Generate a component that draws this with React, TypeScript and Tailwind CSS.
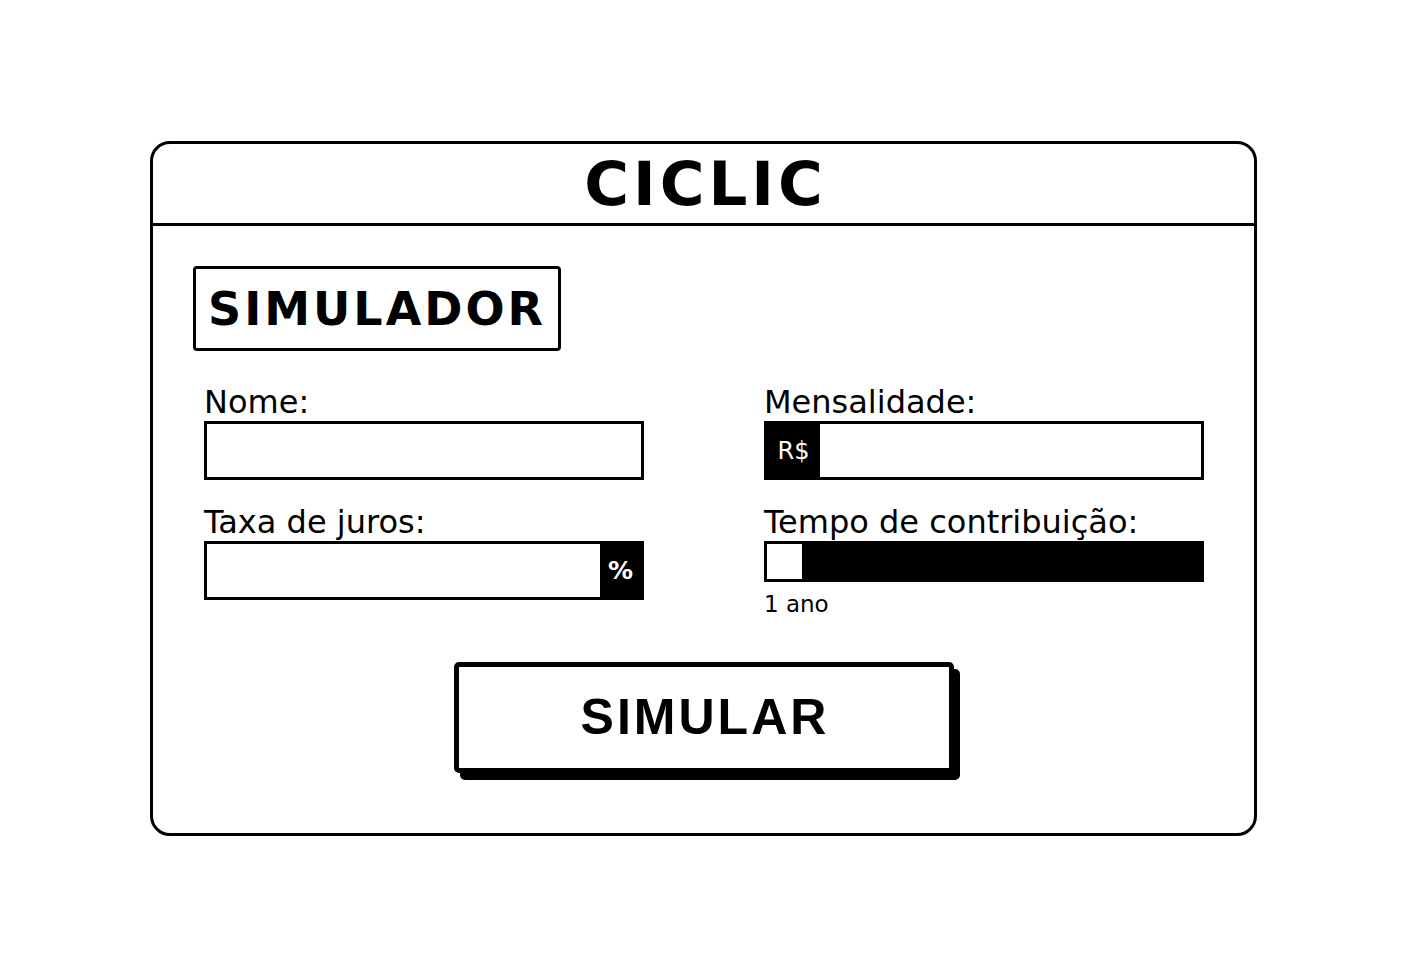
export default function App() {
    const label = "block text-[32px] leading-[26px] mb-[6px] text-black";

    return (
        <div className="min-h-screen bg-white pt-[141px] pl-[3px] font-['DejaVu_Sans',sans-serif] text-black">
            <div className="mx-auto w-[1107px] h-[695px] border-[3px] border-black rounded-[20px] flex flex-col">
                <header className="h-[82px] border-b-[3px] border-black flex items-center justify-center">
                    <h1 className="text-[61px] leading-none font-bold tracking-[4px] pl-[4px]">CICLIC</h1>
                </header>

                <div className="px-[48px] pt-[40px]">
                    <div className="inline-flex items-center h-[85px] px-[12px] -ml-[8px] border-[3px] border-black rounded-[4px]">
                        <h2 className="text-[46px] leading-none font-bold tracking-[3px]">SIMULADOR</h2>
                    </div>

                    <div className="mt-[38px] grid grid-cols-[440px_440px] gap-x-[120px] gap-y-[29px] pl-[3px]">
                        <div>
                            <label className={label}>Nome:</label>
                            <div className="h-[59px] border-[3px] border-black" />
                        </div>

                        <div>
                            <label className={label}>Mensalidade:</label>
                            <div className="h-[59px] border-[3px] border-black flex">
                                <span className="w-[53px] bg-black text-white text-[24px] flex items-center justify-center">R$</span>
                                <div className="flex-1" />
                            </div>
                        </div>

                        <div>
                            <label className={label}>Taxa de juros:</label>
                            <div className="h-[59px] border-[3px] border-black flex">
                                <div className="flex-1" />
                                <span className="w-[41px] bg-black text-white text-[25px] font-bold flex items-center justify-center">%</span>
                            </div>
                        </div>

                        <div>
                            <label className={label}>Tempo de contribuição:</label>
                            <div className="h-[41px] bg-black flex">
                                <div className="w-[41px] h-[41px] bg-white border-[3px] border-black" />
                            </div>
                            <p className="mt-[9px] text-[23px] leading-[26px]">1 ano</p>
                        </div>
                    </div>

                    <div className="mt-[45px] flex justify-center">
                        <button className="w-[500px] h-[111px] border-[5px] border-black rounded-[5px] bg-white shadow-[6px_7px_0_0_#000] font-['Liberation_Sans',sans-serif] font-bold text-[50px] tracking-[3px] pl-[3px]">
                            SIMULAR
                        </button>
                    </div>
                </div>
            </div>
        </div>
    );
}
